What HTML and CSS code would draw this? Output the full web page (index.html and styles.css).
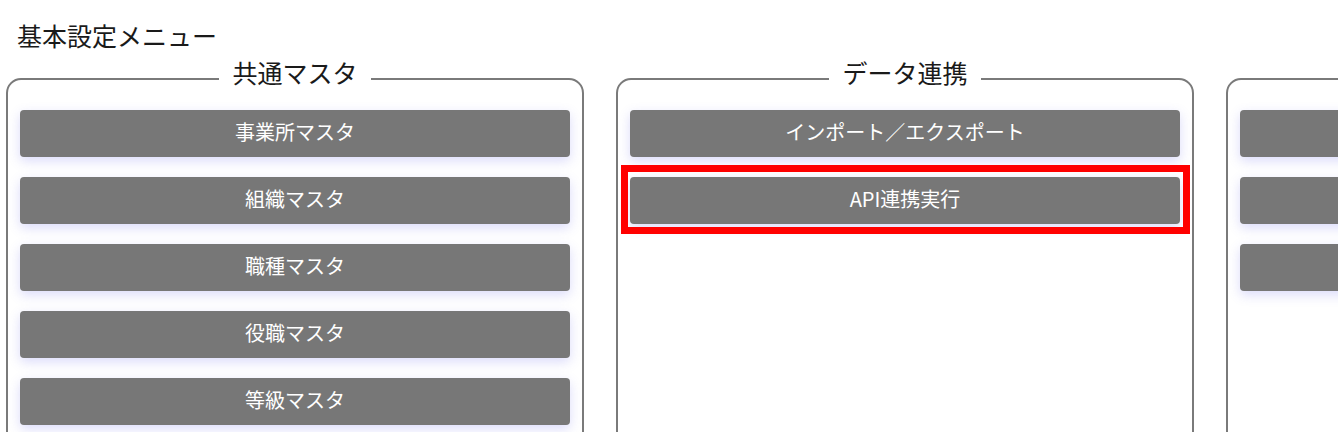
FILE: index.html
```html
<!DOCTYPE html>
<html lang="ja">
<head>
    <meta charset="UTF-8">
    <meta name="viewport" content="width=device-width, initial-scale=1.0">
    <title>基本設定メニュー</title>
    <link rel="stylesheet" href="styles.css">
</head>
<body>
    <div class="page">
        <h1 class="page-title">基本設定メニュー</h1>

        <div class="menu-grid">
            <fieldset class="menu-group">
                <legend>共通マスタ</legend>
                <button type="button" class="menu-btn">事業所マスタ</button>
                <button type="button" class="menu-btn">組織マスタ</button>
                <button type="button" class="menu-btn">職種マスタ</button>
                <button type="button" class="menu-btn">役職マスタ</button>
                <button type="button" class="menu-btn">等級マスタ</button>
            </fieldset>

            <fieldset class="menu-group">
                <legend>データ連携</legend>
                <button type="button" class="menu-btn">インポート／エクスポート</button>
                <button type="button" class="menu-btn highlight">API連携実行</button>
            </fieldset>

            <fieldset class="menu-group">
                <legend>システム管理</legend>
                <button type="button" class="menu-btn">ユーザー管理</button>
                <button type="button" class="menu-btn">権限設定</button>
                <button type="button" class="menu-btn">操作ログ</button>
            </fieldset>
        </div>
    </div>
</body>
</html>
```

FILE: styles.css
```css
html, body {
    margin: 0;
    padding: 0;
    background-color: #fff;
    overflow: hidden;
}

body {
    font-family: "Noto Sans CJK JP", "Noto Sans", sans-serif;
    color: #1a1a1a;
}

.page {
    padding: 17px 0 0 6px;
}

.page-title {
    margin: 0;
    padding-left: 11px;
    font-size: 25px;
    font-weight: normal;
    line-height: 36px;
}

.menu-grid {
    display: grid;
    grid-template-columns: repeat(3, 578px);
    column-gap: 32px;
    margin-top: 1px;
}

.menu-group {
    display: flex;
    flex-direction: column;
    gap: 20px;
    min-width: 0;
    height: 420px;
    margin: 0;
    padding: 6px 12px 20px;
    border: 2px solid #7a7a7a;
    border-radius: 15px;
    box-sizing: border-box;
}

.menu-group legend {
    margin: 0 auto;
    padding: 0 13px 14px;
    font-size: 25px;
    line-height: 36px;
    color: #1a1a1a;
}

.menu-btn {
    position: relative;
    display: block;
    width: 100%;
    height: 47px;
    padding: 0 0 4px;
    border: none;
    border-radius: 4px;
    background-color: #777;
    color: #fff;
    font-family: inherit;
    font-size: 20px;
    line-height: 43px;
    box-shadow: 0 4px 12px rgba(90, 90, 230, 0.22);
    cursor: pointer;
}

.menu-btn:hover {
    background-color: #666;
}

.highlight::after {
    content: "";
    position: absolute;
    top: -12px;
    left: -9px;
    right: -10px;
    bottom: -10px;
    border: 7px solid #f00;
    pointer-events: none;
}
```
